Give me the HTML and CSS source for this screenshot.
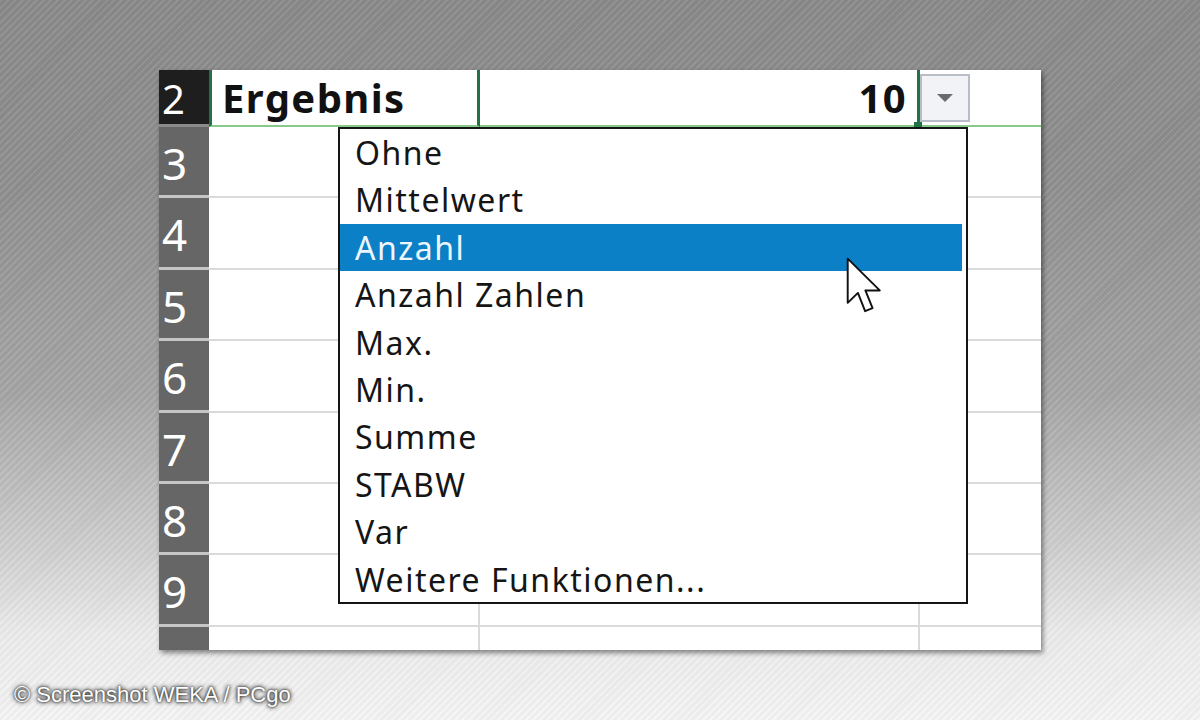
FILE: index.html
```html
<!DOCTYPE html>
<html lang="de">
<head>
  <meta charset="UTF-8" />
  <meta name="viewport" content="width=device-width, initial-scale=1.0" />
  <title>Ergebniszeile</title>
  <link rel="stylesheet" href="styles.css">
</head>
<body>
  <div class="sheet">
    <div class="grid">
      <div class="rowhead active">2</div>
      <div class="cell a2"><b>Ergebnis</b></div>
      <div class="cell b2"><b>10</b></div>
      <div class="cell c2">
        <span class="dd-btn"><svg width="18" height="10" viewBox="0 0 18 10"><path d="M1 1 L17 1 L9 9 Z" fill="#6b6b6b"/></svg></span>
      </div>

      <div class="rowhead">3</div><div class="cell"></div><div class="cell"></div><div class="cell"></div>
      <div class="rowhead">4</div><div class="cell"></div><div class="cell"></div><div class="cell"></div>
      <div class="rowhead">5</div><div class="cell"></div><div class="cell"></div><div class="cell"></div>
      <div class="rowhead">6</div><div class="cell"></div><div class="cell"></div><div class="cell"></div>
      <div class="rowhead">7</div><div class="cell"></div><div class="cell"></div><div class="cell"></div>
      <div class="rowhead">8</div><div class="cell"></div><div class="cell"></div><div class="cell"></div>
      <div class="rowhead">9</div><div class="cell"></div><div class="cell"></div><div class="cell"></div>
      <div class="rowhead"></div><div class="cell"></div><div class="cell"></div><div class="cell"></div>
    </div>

    <ul class="dropdown">
      <li>Ohne</li>
      <li>Mittelwert</li>
      <li class="selected">Anzahl</li>
      <li>Anzahl Zahlen</li>
      <li>Max.</li>
      <li>Min.</li>
      <li>Summe</li>
      <li>STABW</li>
      <li>Var</li>
      <li>Weitere Funktionen...</li>
    </ul>

    <!-- Mauszeiger -->
    <svg class="cursor" width="36" height="58" viewBox="0 0 13 21">
      <path d="M0.6 0.6 L0.6 16.6 L4.3 13 L6.9 19.6 L9.6 18.5 L7 12.1 L12.2 12.1 Z" fill="#fff" stroke="#111" stroke-width="0.7" stroke-linejoin="round"/>
    </svg>
  </div>

  <div class="credit">© Screenshot WEKA / PCgo</div>
</body>
</html>
```

FILE: styles.css
```css
html, body {
  margin: 0;
  height: 100%;
}
body {
  background:
    repeating-linear-gradient(135deg, rgba(255,255,255,0.07) 0 2px, rgba(0,0,0,0.03) 2px 5px),
    linear-gradient(#8a8a8a 0%, #8f8f8f 25%, #a6a6a6 55%, #cfcfcf 76%, #ececec 88%, #f5f5f5 100%);
  font-family: "Noto Sans", "Open Sans", sans-serif;
  padding-top: 70px;
  box-sizing: border-box;
}
.sheet {
  position: relative;
  margin-left: 159px;
  width: 882px;
  height: 580px;
  background: #fff;
  overflow: hidden;
  box-shadow: 2px 3px 5px rgba(0,0,0,0.45);
}
.grid {
  display: grid;
  grid-template-columns: 50px 271px 440px 1fr;
  grid-template-rows: 57px repeat(7, 71.4px) 40px;
}
.rowhead {
  background: #666;
  color: #fff;
  font-size: 44px;
  line-height: 1;
  padding: 14px 0 0 3px;
  border-bottom: 3px solid #c6c6c6;
  box-sizing: border-box;
}
.rowhead.active {
  background: #1e1e1e;
  font-size: 40px;
  padding-top: 9px;
  border-bottom-color: #8a8a8a;
}
.cell {
  border-bottom: 2px solid #dadada;
  border-right: 2px solid #dadada;
  box-sizing: border-box;
}
.cell:nth-child(4n) {
  border-right: none;
}
.a2, .b2, .c2 {
  border-bottom: 2px solid #86c98a;
  font-size: 40px;
  letter-spacing: 1.4px;
  display: flex;
  align-items: center;
  color: #111;
}
.a2 {
  border-left: 3px solid #217346;
  border-right: 3px solid #217346;
  padding-left: 10px;
}
.b2 {
  position: relative;
  justify-content: flex-end;
  padding-right: 10px;
  border-right: 3px solid #217346;
}
.b2::after {
  content: "";
  position: absolute;
  right: -5px;
  bottom: -3px;
  width: 8px;
  height: 6px;
  background: #217346;
}
.c2 {
  border-right: none;
  align-items: flex-start;
  padding-top: 4px;
}
.dd-btn {
  width: 50px;
  height: 48px;
  box-sizing: border-box;
  border: 2px solid #b9bec6;
  background: #f1f3f6;
  display: flex;
  align-items: center;
  justify-content: center;
}
.dropdown {
  position: absolute;
  left: 179px;
  top: 57px;
  width: 630px;
  height: 477px;
  margin: 0;
  padding: 0 4px 0 0;
  list-style: none;
  background: #fff;
  border: 2px solid #151515;
  box-sizing: border-box;
}
.dropdown li {
  height: 47.4px;
  line-height: 47.4px;
  padding-left: 15px;
  font-size: 32px;
  letter-spacing: 1.5px;
  color: #151515;
  white-space: nowrap;
}
.dropdown li.selected {
  background: #0b80c6;
  color: #eef5fb;
}
.cursor {
  position: absolute;
  left: 687px;
  top: 187px;
}
.credit {
  margin: 32px 0 0 14px;
  font-family: "Liberation Sans", Arial, sans-serif;
  font-size: 22px;
  color: #fff;
  text-shadow: 0 0 2px #222, 0 0 4px #444, 0 0 5px #555;
}
```
